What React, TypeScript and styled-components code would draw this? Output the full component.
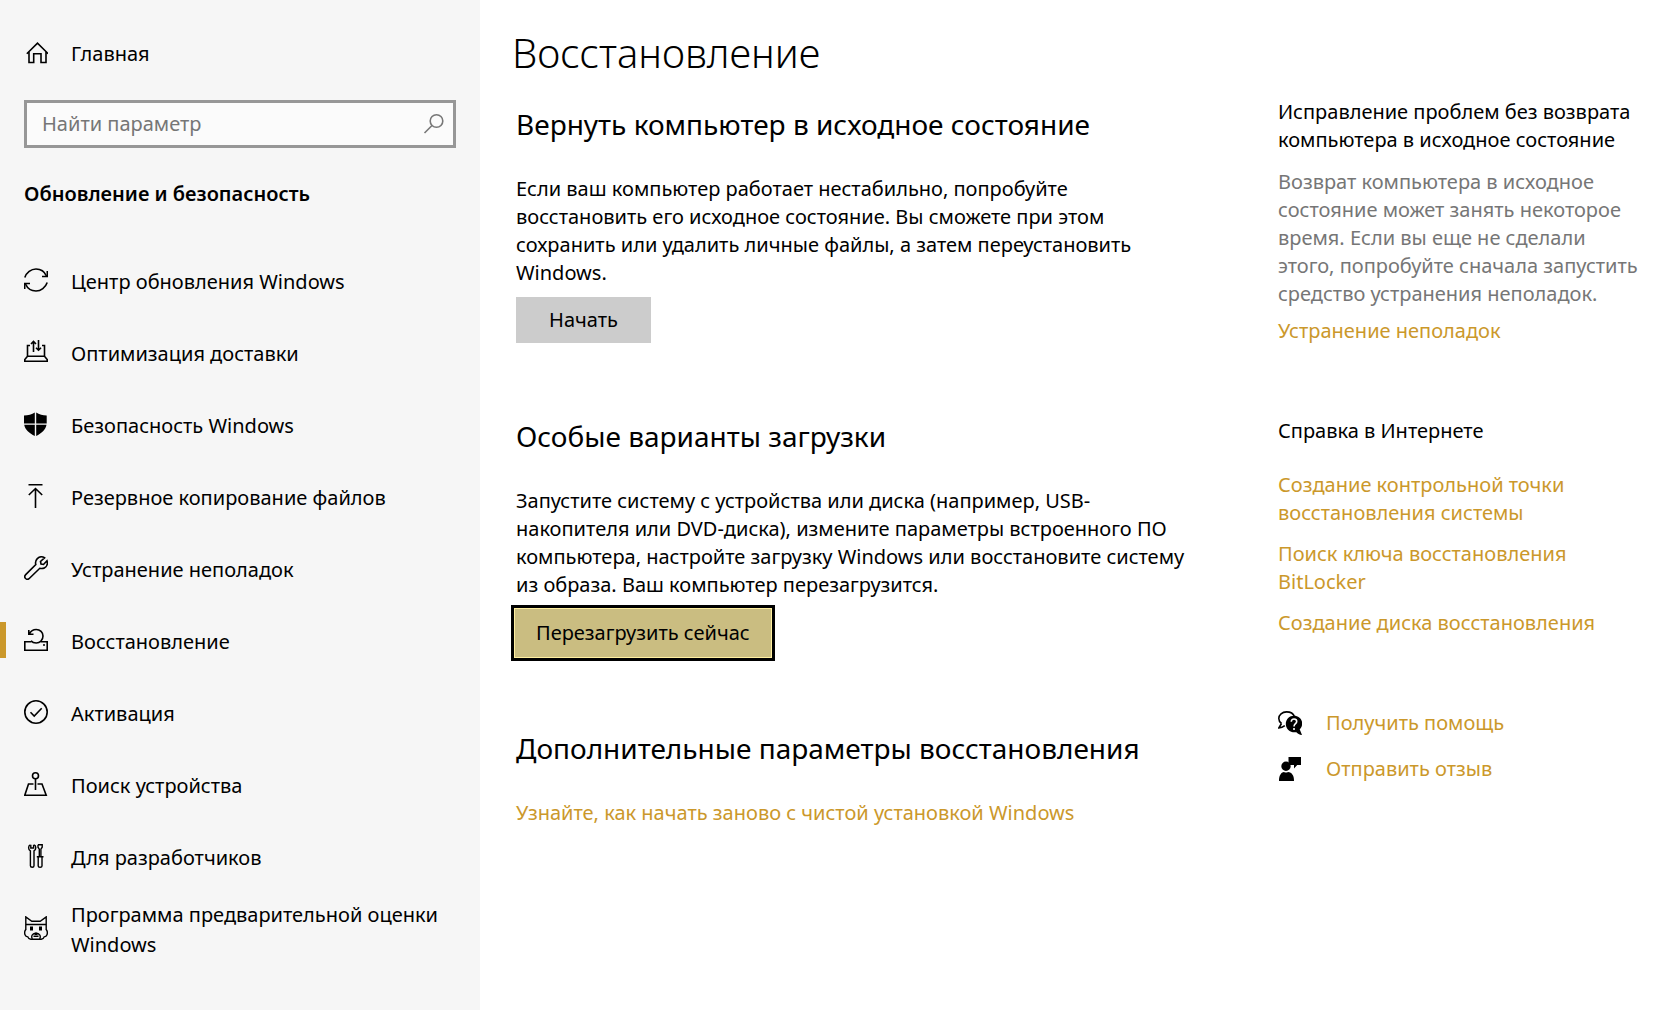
import React from "react";
import styled, { createGlobalStyle } from "styled-components";

const GlobalStyle = createGlobalStyle`
  *, *::before, *::after { box-sizing: border-box; }
  body {
    margin: 0;
    background: #ffffff;
    color: #000000;
    font-family: "Noto Sans", "Open Sans", sans-serif;
    font-size: 20px;
    line-height: 28px;
  }
  h1, h2, h3, p, ul { margin: 0; padding: 0; font-weight: 400; }
  ul { list-style: none; }
`;

const Page = styled.div`
  display: grid;
  grid-template-columns: 480px minmax(0, 1fr) 395px;
  min-height: 100vh;
`;

const Sidebar = styled.nav`
  background: #f6f6f6;
  padding: 18px 0 40px;
`;

const Glyph = styled.svg`
  flex: none;
  width: 24px;
  height: 24px;
  fill: none;
  stroke: currentColor;
  stroke-width: 1.6;
`;

const NavLink = styled.a<{ $active?: boolean }>`
  display: flex;
  align-items: center;
  gap: 23px;
  min-height: 72px;
  padding: 0 24px 0 18px;
  border-left: 6px solid transparent;
  line-height: 30px;
  color: #000000;
  text-decoration: none;
  ${(p) =>
    p.$active &&
    "border-image: linear-gradient(transparent 16px, #cb982b 16px, #cb982b 52px, transparent 52px) 0 0 0 6;"}

  ${Glyph} { margin-bottom: 4px; }
`;

const SearchBox = styled.label`
  display: flex;
  align-items: center;
  height: 48px;
  margin: 10px 24px 32px;
  padding: 0 9px 0 15px;
  border: 3px solid #979797;
  background: #fbfbfb;
  color: #777777;
`;

const SearchInput = styled.input`
  flex: 1;
  min-width: 0;
  padding: 0;
  border: 0;
  outline: 0;
  background: transparent;
  font: inherit;
  color: #000000;
  &::placeholder { color: #767676; opacity: 1; }
`;

const GroupTitle = styled.h2`
  && { font-weight: 600; }
  font-size: 20px;
  padding: 0 24px;
  margin-bottom: 38px;
`;

const Main = styled.main`
  padding: 24px 20px 24px 32px;
`;

const Title = styled.h1`
  && { font-weight: 300; }
  font-size: 40px;
  line-height: 58px;
  margin-bottom: 22px;
`;

const Section = styled.section`
  display: flex;
  flex-direction: column;
  align-items: flex-start;
  max-width: 684px;
  padding-left: 4px;
  &:not(:last-child) { min-height: 312px; }
`;

const SectionTitle = styled.h2`
  font-size: 28px;
  line-height: 40px;
  margin-bottom: 31px;
`;

const Button = styled.button`
  min-width: 135px;
  height: 46px;
  margin-top: 10px;
  padding: 0 21px;
  border: 0;
  background: #cccccc;
  color: #000000;
  font: inherit;
`;

const FocusedButton = styled(Button)`
  height: 50px;
  margin: 9px 0 0 -2px;
  border: 1px solid #fff0a0;
  background: #cabd81;
  outline: 3px solid #000000;
`;

const Link = styled.a`
  color: #cb982b;
  text-decoration: none;
`;

const Aside = styled.aside`
  padding: 98px 34px 24px 0;
`;

const AsideBlock = styled.section`
  margin-bottom: 72px;
`;

const AsideTitle = styled.h3`
  font-size: 20px;
`;

const AsideText = styled.p`
  margin: 14px 0 9px;
  color: #767676;
`;

const LinkList = styled.ul`
  display: grid;
  gap: 13px;
  margin-top: 26px;
`;

const SupportList = styled.ul`
  display: grid;
  gap: 18px;
`;

const SupportLink = styled(Link)`
  display: flex;
  align-items: center;
  gap: 24px;
  svg { color: #000000; }
`;

const icons: Record<string, React.ReactNode> = {
  home: <path d="M2.800 13.800 13.500 3.200l10.700 10.600M5 12v10.500h4.700v-8.700h7.300v8.700h5V12" />,
  sync: (
    <>
      <path d="M.8 9.500C2.500 4.500 7 1 12 1c4.500 0 8.500 2.500 10.500 7M23.200 14.500C21.500 19.500 17 23 12 23c-4.500 0-8.500-2.500-10.500-7" />
      <path d="M23.300 3v5.500H18M.7 21v-5.500H6" />
    </>
  ),
  delivery: (
    <>
      <path d="M6 5.500H3.500V16M18 5.500h2.500V16M3.500 16.200h17l2.700 3.300v1.700H.8v-1.700z" />
      <path d="M9.500 12V1.500M7 4l2.500-2.500L12 4M14.500 0v10M12 7.700l2.500 2.500L17 7.700" />
    </>
  ),
  shield: (
    <path
      fill="currentColor"
      stroke="none"
      d="M10.800 .6C8 2.800 4 3.400 0 3.400V11.500h10.800zM12.200 .6C15 2.800 19 3.400 22.700 3.400V11.500H12.200zM.2 12.800C1 17.500 5.500 21.500 10.800 24V12.800zM22.500 12.800C21.700 17.500 17.500 21.500 12.200 24V12.800z"
    />
  ),
  backup: <path d="M4.500 .8h14M11.500 24V4.500M4.800 11 11.500 4.500 18.200 11" />,
  wrench: (
    <path d="M20.500 1.800 16.500 5.500l.5 2.500 2.500.5 3.500-3.700c1 3-.2 6-2.700 7.200-1.500.7-3 .7-4.500.3L5.500 22.300c-1.200 1.200-2.800 1.200-3.900.2-1.100-1.100-1-2.700.1-3.900L11.800 8.500c-.6-2 0-4.300 1.500-5.900 2-1.900 4.700-2.300 7.200-.8z" />
  ),
  recovery: (
    <>
      <path d="M7.500 13.700H.8v8.500h22.400v-8.500h-6.700" />
      <path d="M4.800 2v4.300h4.700M5.300 6C7 2.700 9.500 1.500 12.200 1.500c3.900 0 6.800 2.900 6.800 6.600 0 3.900-3 6.900-6.800 6.900-2.200 0-4-.8-5.200-2.300M19 17h2" />
    </>
  ),
  check: (
    <>
      <circle cx="12" cy="12" r="11.200" />
      <path d="m6.500 12.300 3.700 3.700 7.500-7.700" />
    </>
  ),
  locate: (
    <>
      <circle cx="11.500" cy="3.800" r="3" />
      <path d="M11.500 7v11M9.500 12H4.500L.8 23.200h21.400L18 12h-4.500" />
    </>
  ),
  tools: (
    <g strokeWidth="1.400">
      <path d="M6.300 .8C5.200 1.300 4.600 2.400 4.600 3.700c0 1.500.7 2.500 1.800 3.100V21.800c0 2 3.600 2 3.600 0V6.800c1.100-.6 1.800-1.600 1.800-3.100 0-1.300-.6-2.400-1.700-2.900" />
      <path d="M6.800 .8v3.200h2.800V.8" />
      <path d="M14 .8h4.200v2.400l-1.300 2v7.300M14 .8v2.400l1.300 2v7.300M12.800 12.800h6.700M14.200 13v9c0 1.700 3.800 1.700 3.800 0v-9" />
    </g>
  ),
  insider: (
    <g strokeWidth="1.400">
      <path d="M1.800 14V.9L7.800 5.300h8.400L22.200 .9V14M1.800 8.500h20.400" />
      <path d="M1.800 13.500C.6 15 .4 17 1 18.700c.5 1.400 1.500 2 2.800 2.200.4 1.300 1.500 2.100 3 2.300h10.400c1.500-.2 2.600-1 3-2.300 1.300-.2 2.300-.8 2.800-2.200.6-1.700.4-3.700-.8-5.200" />
      <path d="M8.300 23c-1.400-2.600-.6-5.400 3.700-6 4.300.6 5.100 3.400 3.700 6M9.500 20.300h5" />
      <path fill="currentColor" stroke="none" d="M6 10.500h3V14.500H6zM15 10.500h3V14.500h-3zM10.500 17h3v2h-3z" />
    </g>
  ),
  search: (
    <>
      <circle cx="16.500" cy="9" r="6.300" />
      <path d="M12 13.500 4.500 21" />
    </>
  ),
  help: (
    <>
      <path d="M3.500 12.500C1.500 11 .8 9 .8 7.500.8 3.700 4.200.9 8.500.9c4 0 7 2 8 4.800M3.500 12.500.8 17c3 0 4.500-1 6-2.300" />
      <path fill="currentColor" stroke="none" d="M16 4.800c4.600 0 8.200 3.300 8.200 7.700 0 2.300-.9 4.400-2.500 5.800l2.300 5.700c-2.700-.4-4.300-1.500-5.600-2.800-5.800 1-10.600-3-10.600-8.200 0-4.800 3.700-8.200 8.200-8.200z" />
      <path stroke="#fff" strokeWidth="1.600" d="M13.300 10.700c0-3.700 5.400-3.400 5.400-.2 0 2.200-2.700 2.200-2.700 5M16 17v2" />
    </>
  ),
  feedback: (
    <path
      fill="currentColor"
      stroke="none"
      d="M10.500 0H23v8h-3.800L16 11.500V8h-3.500L10.500 5zM8 4.500a4.700 4.700 0 1 1 0 9.400 4.700 4.700 0 0 1 0-9.400zM1 24c0-5.500 2-8.500 5-9 1.300.7 2.700.7 4 0 4 .5 6 3.500 6 9z"
    />
  ),
};

const Icon = ({ name }: { name: string }) => (
  <Glyph viewBox="0 0 24 24" aria-hidden="true">
    {icons[name]}
  </Glyph>
);

const navItems = [
  { icon: "sync", label: "Центр обновления Windows" },
  { icon: "delivery", label: "Оптимизация доставки" },
  { icon: "shield", label: "Безопасность Windows" },
  { icon: "backup", label: "Резервное копирование файлов" },
  { icon: "wrench", label: "Устранение неполадок" },
  { icon: "recovery", label: "Восстановление", active: true },
  { icon: "check", label: "Активация" },
  { icon: "locate", label: "Поиск устройства" },
  { icon: "tools", label: "Для разработчиков" },
  { icon: "insider", label: "Программа предварительной оценки Windows" },
];

const helpLinks = [
  "Создание контрольной точки восстановления системы",
  "Поиск ключа восстановления BitLocker",
  "Создание диска восстановления",
];

export default function App() {
  return (
    <>
      <GlobalStyle />
      <Page>
        <Sidebar>
          <NavLink href="#home">
            <Icon name="home" />
            Главная
          </NavLink>
          <SearchBox>
            <SearchInput type="text" placeholder="Найти параметр" aria-label="Найти параметр" />
            <Icon name="search" />
          </SearchBox>
          <GroupTitle>Обновление и безопасность</GroupTitle>
          <ul>
            {navItems.map((item) => (
              <li key={item.label}>
                <NavLink href="#" $active={item.active} aria-current={item.active ? "page" : undefined}>
                  <Icon name={item.icon} />
                  {item.label}
                </NavLink>
              </li>
            ))}
          </ul>
        </Sidebar>
        <Main>
          <Title>Восстановление</Title>
          <Section>
            <SectionTitle>Вернуть компьютер в исходное состояние</SectionTitle>
            <p>
              Если ваш компьютер работает нестабильно, попробуйте восстановить его исходное
              состояние. Вы сможете при этом сохранить или удалить личные файлы, а затем
              переустановить Windows.
            </p>
            <Button type="button">Начать</Button>
          </Section>
          <Section>
            <SectionTitle>Особые варианты загрузки</SectionTitle>
            <p>
              Запустите систему с устройства или диска (например, USB-накопителя или
              DVD-диска), измените параметры встроенного ПО компьютера, настройте загрузку
              Windows или восстановите систему из образа. Ваш компьютер перезагрузится.
            </p>
            <FocusedButton type="button">Перезагрузить сейчас</FocusedButton>
          </Section>
          <Section>
            <SectionTitle>Дополнительные параметры восстановления</SectionTitle>
            <Link href="#">Узнайте, как начать заново с чистой установкой Windows</Link>
          </Section>
        </Main>
        <Aside>
          <AsideBlock>
            <AsideTitle>Исправление проблем без возврата компьютера в исходное состояние</AsideTitle>
            <AsideText>
              Возврат компьютера в исходное состояние может занять некоторое время. Если вы еще не
              сделали этого, попробуйте сначала запустить средство устранения неполадок.
            </AsideText>
            <Link href="#">Устранение неполадок</Link>
          </AsideBlock>
          <AsideBlock>
            <AsideTitle>Справка в Интернете</AsideTitle>
            <LinkList>
              {helpLinks.map((text) => (
                <li key={text}>
                  <Link href="#">{text}</Link>
                </li>
              ))}
            </LinkList>
          </AsideBlock>
          <SupportList>
            <li>
              <SupportLink href="#">
                <Icon name="help" />
                Получить помощь
              </SupportLink>
            </li>
            <li>
              <SupportLink href="#">
                <Icon name="feedback" />
                Отправить отзыв
              </SupportLink>
            </li>
          </SupportList>
        </Aside>
      </Page>
    </>
  );
}
